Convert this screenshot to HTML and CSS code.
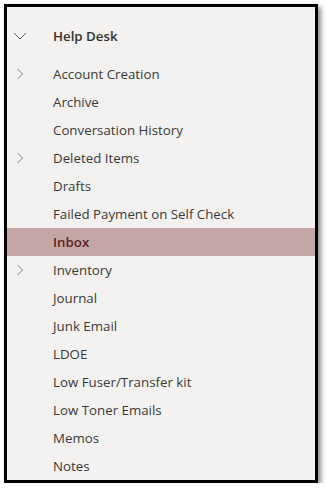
FILE: index.html
```html
<!DOCTYPE html>
<html>
<head>
<meta charset="utf-8">
<link rel="stylesheet" href="styles.css">
</head>
<body>
<div class="frame">
  <div class="row header">
    <span class="chev"><svg width="14" height="14" viewBox="0 0 14 14"><path d="M1 4 L7 10 L13 4" fill="none" stroke="#605e5c" stroke-width="1"/></svg></span>
    <span class="label">Help Desk</span>
  </div>
  <ul class="list">
    <li class="row"><span class="chev"><svg width="14" height="14" viewBox="0 0 14 14"><path d="M4.5 2 L9.5 7 L4.5 12" fill="none" stroke="#8a8886" stroke-width="1"/></svg></span><span class="label">Account Creation</span></li>
    <li class="row"><span class="chev"></span><span class="label">Archive</span></li>
    <li class="row"><span class="chev"></span><span class="label">Conversation History</span></li>
    <li class="row"><span class="chev"><svg width="14" height="14" viewBox="0 0 14 14"><path d="M4.5 2 L9.5 7 L4.5 12" fill="none" stroke="#8a8886" stroke-width="1"/></svg></span><span class="label">Deleted Items</span></li>
    <li class="row"><span class="chev"></span><span class="label">Drafts</span></li>
    <li class="row"><span class="chev"></span><span class="label">Failed Payment on Self Check</span></li>
    <li class="row selected"><span class="chev"></span><span class="label">Inbox</span></li>
    <li class="row"><span class="chev"><svg width="14" height="14" viewBox="0 0 14 14"><path d="M4.5 2 L9.5 7 L4.5 12" fill="none" stroke="#8a8886" stroke-width="1"/></svg></span><span class="label">Inventory</span></li>
    <li class="row"><span class="chev"></span><span class="label">Journal</span></li>
    <li class="row"><span class="chev"></span><span class="label">Junk Email</span></li>
    <li class="row"><span class="chev"></span><span class="label">LDOE</span></li>
    <li class="row"><span class="chev"></span><span class="label">Low Fuser/Transfer kit</span></li>
    <li class="row"><span class="chev"></span><span class="label">Low Toner Emails</span></li>
    <li class="row"><span class="chev"></span><span class="label">Memos</span></li>
    <li class="row"><span class="chev"></span><span class="label">Notes</span></li>
  </ul>
</div>
</body>
</html>
```
FILE: styles.css
```css
html, body {
  margin: 0;
  padding: 0;
  background: #ffffff;
}
body {
  padding: 4px 0 0 4px;
  font-family: "Open Sans", "Noto Sans", sans-serif;
}
.frame {
  box-sizing: border-box;
  width: 314px;
  height: 479px;
  border: 3px solid #000;
  background: #f3f2f1;
  box-shadow: 3px 3px 5px rgba(0, 0, 0, 0.45);
  padding-top: 15px;
  overflow: hidden;
}
.list {
  list-style: none;
  margin: 10px 0 0 0;
  padding: 0;
}
.row {
  display: flex;
  align-items: center;
  height: 28px;
  font-size: 13.3px;
  color: #3b3a39;
}
.chev {
  width: 46px;
  display: flex;
  align-items: center;
  padding-left: 6px;
  box-sizing: border-box;
}
.header .label {
  font-weight: 600;
  color: #323130;
}
.selected {
  background: #c4a6a6;
}
.selected .label {
  font-weight: 600;
  color: #5c1f25;
}
```
